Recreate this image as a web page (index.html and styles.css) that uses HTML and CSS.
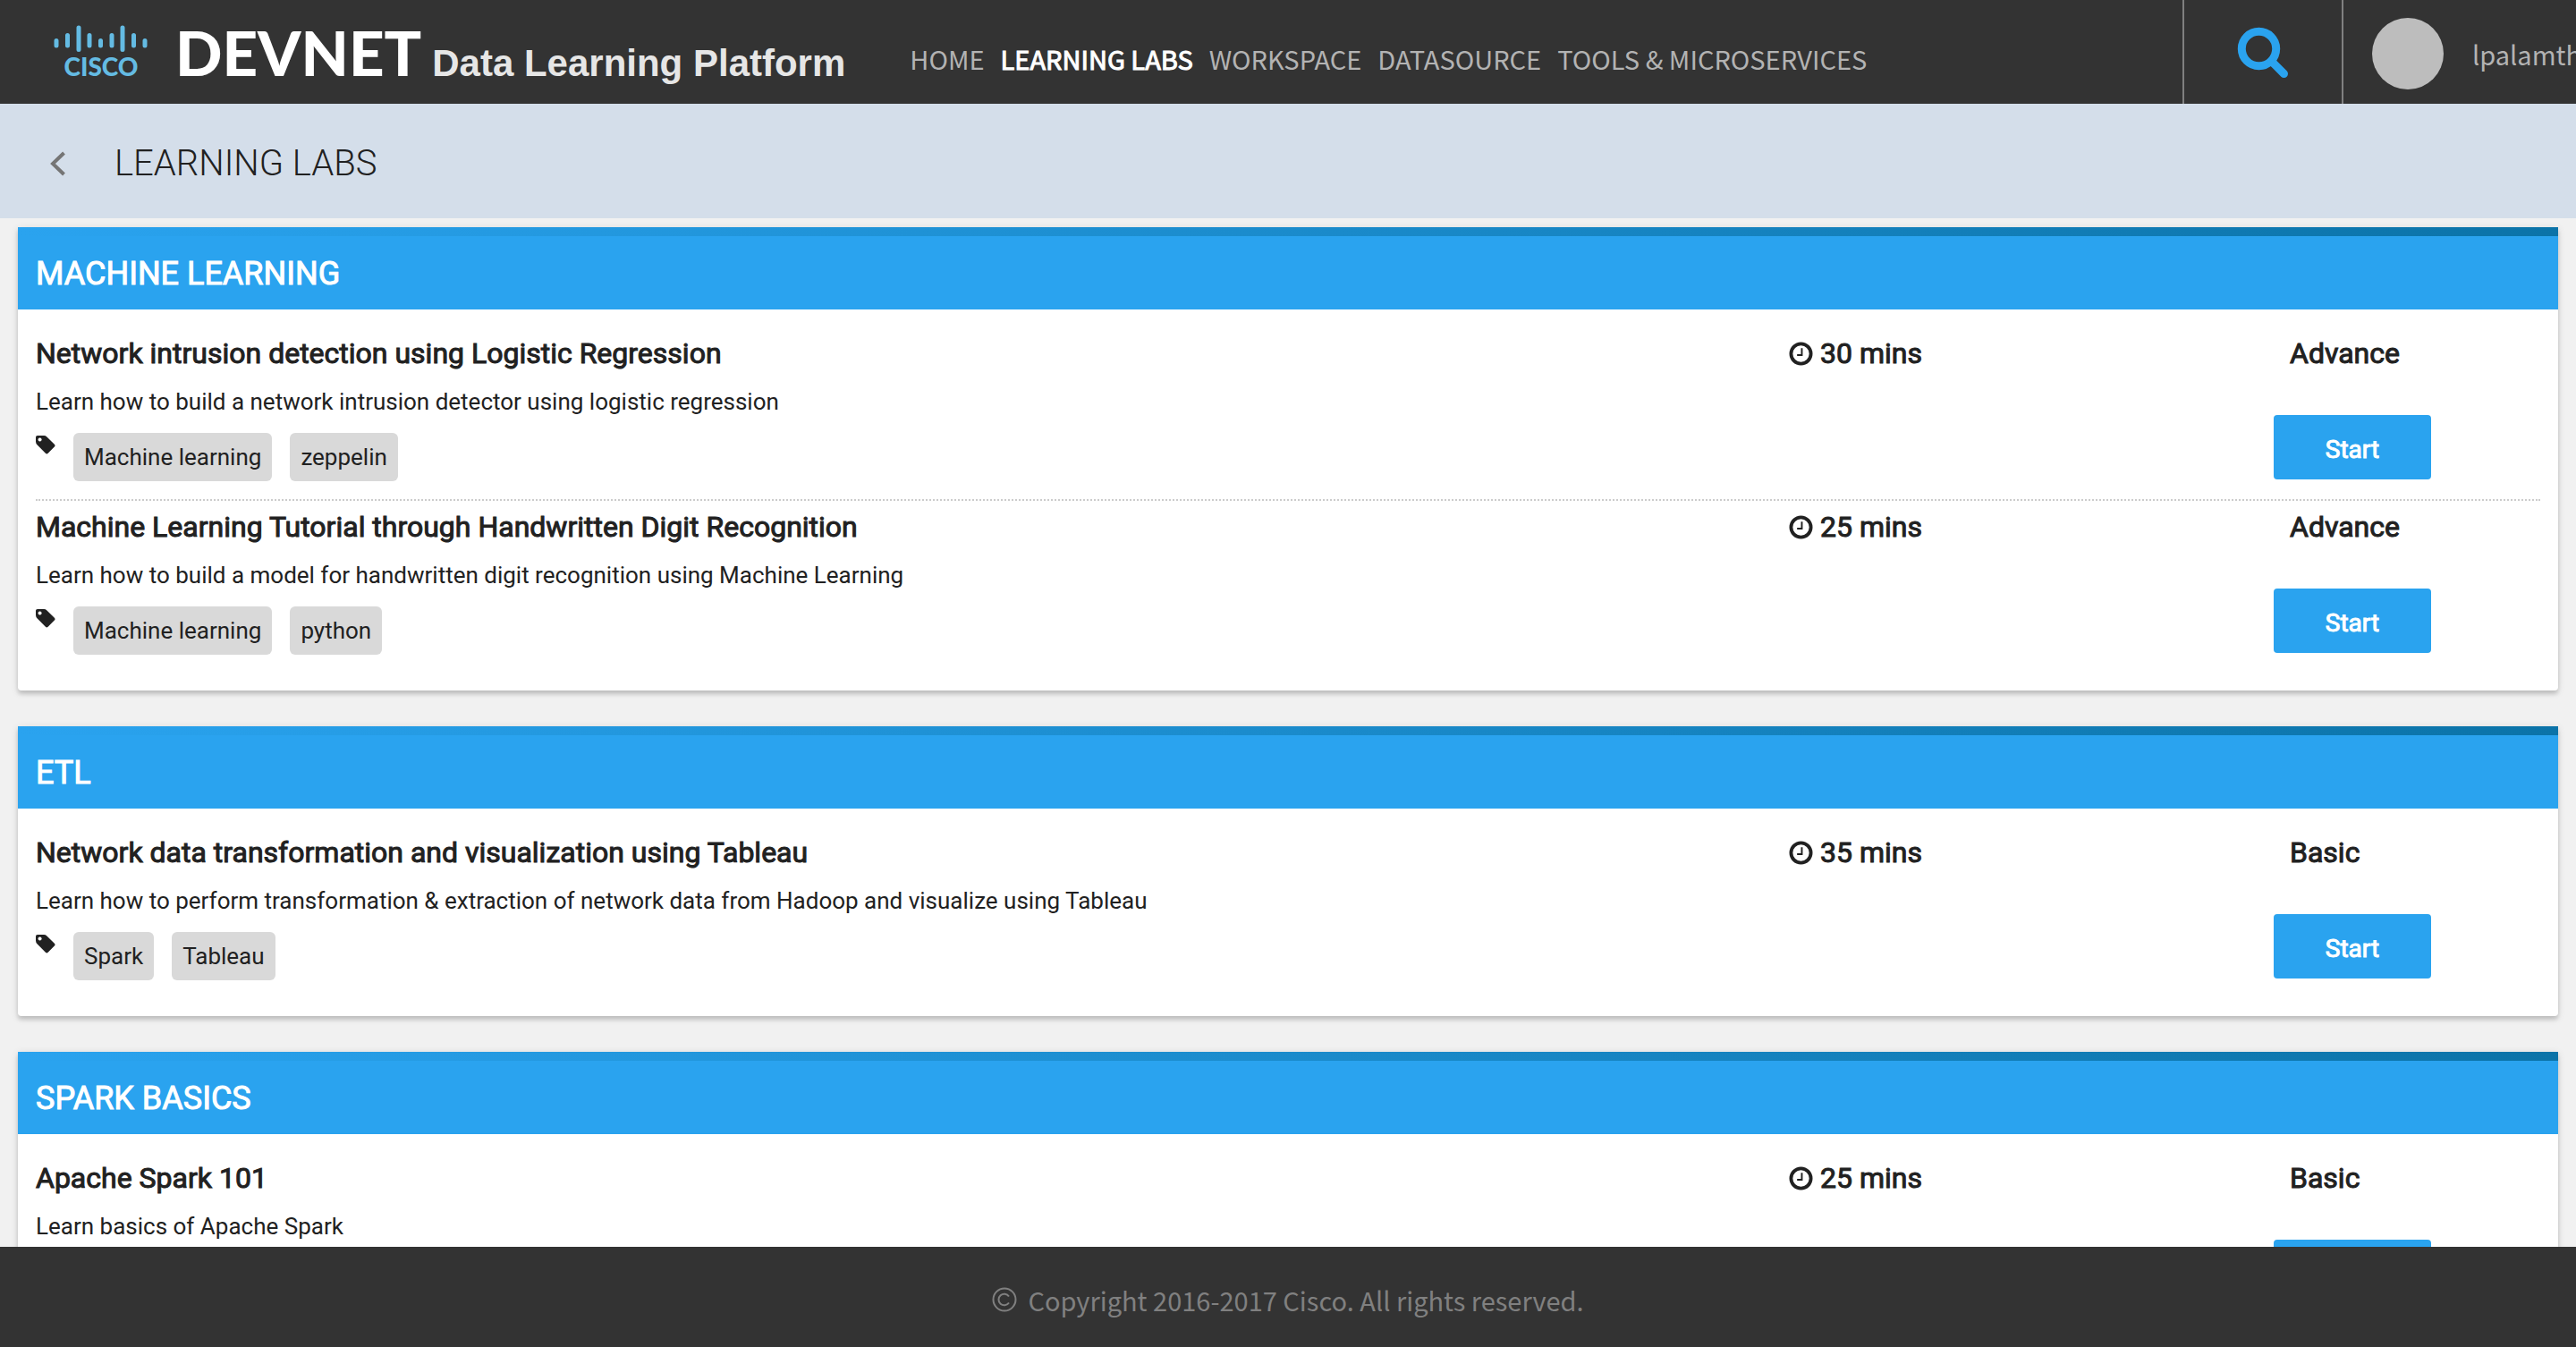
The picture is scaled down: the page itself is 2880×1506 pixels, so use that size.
FILE: index.html
```html
<!DOCTYPE html>
<html lang="en">
<head>
<meta charset="utf-8">
<meta name="viewport" content="width=device-width, initial-scale=1">
<title>Learning Labs</title>
<link rel="stylesheet" href="styles.css">
</head>
<body>
<svg class="sprite" aria-hidden="true">
  <symbol id="tag" viewBox="0 0 23 23">
    <path fill-rule="evenodd" d="M0 3Q0 1 2 1L9.500 1Q11.500 1 13 2.500L21.800 11.300Q23.200 12.700 21.800 14.200L14.300 21.700Q12.800 23 11.400 21.700L1.800 12Q0 10.200 0 8ZM4.800 3.700a2.100 2.100 0 1 0 .01 0Z"/>
  </symbol>
  <symbol id="clock" viewBox="0 0 28 28">
    <circle cx="14" cy="14" r="11.500" fill="none" stroke="currentColor" stroke-width="4"/>
    <path d="M15 7.500V15.500H9.500" fill="none" stroke="currentColor" stroke-width="2"/>
  </symbol>
</svg>

<header class="topbar">
  <a class="brand" href="#" aria-label="Cisco DevNet Data Learning Platform">
    <span class="cisco">
      <svg class="cisco-bars" viewBox="0 0 106 30" aria-hidden="true">
        <path d="M3 17.500V23M15.500 11.500V23M28 3V27.500M40 11.500V23M52.500 17.500V23M65 11.500V23M77 3V27.500M89.500 11.500V23M102 17.500V23"/>
      </svg>
      <span class="cisco-word">CISCO</span>
    </span>
    <span class="devnet">DEVNET</span>
    <span class="platform">Data Learning Platform</span>
  </a>
  <nav class="menu">
    <a href="#">HOME</a>
    <a href="#" class="active">LEARNING LABS</a>
    <a href="#">WORKSPACE</a>
    <a href="#">DATASOURCE</a>
    <a href="#">TOOLS &amp; MICROSERVICES</a>
  </nav>
  <button class="search" type="button" aria-label="Search">
    <svg viewBox="0 0 58 58" aria-hidden="true"><circle cx="24.500" cy="24.500" r="19.200"/><path d="M39 39L52.500 52.500"/></svg>
  </button>
  <a class="user" href="#">
    <span class="avatar"></span>
    <span class="username">lpalamth</span>
  </a>
</header>

<div class="titlebar">
  <button class="back" type="button" aria-label="Back">
    <svg viewBox="0 0 18 28" aria-hidden="true"><path d="M15.500 2L3 14L15.500 26"/></svg>
  </button>
  <h1>LEARNING LABS</h1>
</div>

<main class="labs">
  <section class="card">
    <h2>MACHINE LEARNING</h2>
    <div class="card-body">
      <article class="lab">
        <div class="info">
          <h3>Network intrusion detection using Logistic Regression</h3>
          <p>Learn how to build a network intrusion detector using logistic regression</p>
          <div class="tags"><svg aria-hidden="true"><use href="#tag"/></svg><span>Machine learning</span><span>zeppelin</span></div>
        </div>
        <div class="time"><svg aria-hidden="true"><use href="#clock"/></svg>30 mins</div>
        <div class="action"><span class="level">Advance</span><button type="button">Start</button></div>
      </article>
      <article class="lab">
        <div class="info">
          <h3>Machine Learning Tutorial through Handwritten Digit Recognition</h3>
          <p>Learn how to build a model for handwritten digit recognition using Machine Learning</p>
          <div class="tags"><svg aria-hidden="true"><use href="#tag"/></svg><span>Machine learning</span><span>python</span></div>
        </div>
        <div class="time"><svg aria-hidden="true"><use href="#clock"/></svg>25 mins</div>
        <div class="action"><span class="level">Advance</span><button type="button">Start</button></div>
      </article>
    </div>
  </section>

  <section class="card">
    <h2>ETL</h2>
    <div class="card-body">
      <article class="lab">
        <div class="info">
          <h3>Network data transformation and visualization using Tableau</h3>
          <p>Learn how to perform transformation &amp; extraction of network data from Hadoop and visualize using Tableau</p>
          <div class="tags"><svg aria-hidden="true"><use href="#tag"/></svg><span>Spark</span><span>Tableau</span></div>
        </div>
        <div class="time"><svg aria-hidden="true"><use href="#clock"/></svg>35 mins</div>
        <div class="action"><span class="level">Basic</span><button type="button">Start</button></div>
      </article>
    </div>
  </section>

  <section class="card">
    <h2>SPARK BASICS</h2>
    <div class="card-body">
      <article class="lab">
        <div class="info">
          <h3>Apache Spark 101</h3>
          <p>Learn basics of Apache Spark</p>
        </div>
        <div class="time"><svg aria-hidden="true"><use href="#clock"/></svg>25 mins</div>
        <div class="action"><span class="level">Basic</span><button type="button" aria-label="Start"></button></div>
      </article>
    </div>
  </section>
</main>

<footer class="footer">
  <svg viewBox="0 0 28 28" aria-hidden="true"><circle cx="14" cy="14" r="12.500"/><path d="M19 10.500A6.300 6.300 0 1 0 19 17.500"/></svg>
  <span>Copyright 2016-2017 Cisco. All rights reserved.</span>
</footer>
</body>
</html>
```

FILE: styles.css
```css
* {
  box-sizing: border-box;
}

body {
  margin: 0;
  height: 100vh;
  display: flex;
  flex-direction: column;
  overflow: hidden;
  background: #f1f1f1;
  color: #212121;
  font-family: Roboto, sans-serif;
}

h1, h2, h3, p {
  margin: 0;
}

a {
  color: inherit;
  text-decoration: none;
}

button {
  border: 0;
  padding: 0;
  background: none;
  font-family: inherit;
  cursor: pointer;
}

.sprite {
  display: none;
}

/* Top bar */
.topbar {
  flex: none;
  display: flex;
  height: 116px;
  overflow: hidden;
  background: #333;
  color: #b3b3b3;
  font-family: "Noto Sans CJK SC", sans-serif;
  font-size: 29px;
}

.brand {
  display: flex;
  align-items: baseline;
  padding: 0 72px 0 60px;
  line-height: 118px;
  white-space: nowrap;
}

.cisco {
  width: 106px;
  margin-right: 30px;
  line-height: 1;
  color: #64bbe3;
}

.cisco-bars {
  display: block;
  width: 106px;
  height: 30px;
  fill: none;
  stroke: currentColor;
  stroke-width: 5;
  stroke-linecap: round;
}

.cisco-word {
  display: block;
  font: 900 28px/32px Lato, sans-serif;
  text-align: center;
}

.devnet {
  margin-right: 12px;
  color: #fff;
  font-family: Lato, sans-serif;
  font-weight: 900;
  font-size: 69px;
}

.platform {
  color: #e6e6e6;
  font-family: "Liberation Sans", sans-serif;
  font-weight: 700;
  font-size: 42px;
}

.menu {
  flex: 1;
  display: flex;
  align-items: center;
  gap: 18px;
  padding-top: 14px;
  white-space: nowrap;
}

.menu .active {
  color: #fff;
  -webkit-text-stroke: 1px currentColor;
}

.search {
  flex: none;
  display: grid;
  place-items: center;
  width: 180px;
  padding-top: 2px;
  border: solid #808080;
  border-width: 0 2px;
}

.search svg {
  width: 58px;
  height: 58px;
  fill: none;
  stroke: #2aa3ef;
  stroke-width: 9;
  stroke-linecap: round;
}

.user {
  flex: none;
  display: flex;
  align-items: center;
  gap: 32px;
  width: 260px;
  padding: 4px 0 0 32px;
}

.avatar {
  flex: none;
  width: 80px;
  height: 80px;
  border-radius: 50%;
  background: #bdbdbd;
}

/* Page title */
.titlebar {
  flex: none;
  display: flex;
  align-items: center;
  height: 128px;
  padding: 6px 0 0 56px;
  background: #d4deea;
}

.back {
  display: flex;
  margin-right: 54px;
}

.back svg {
  width: 18px;
  height: 28px;
  fill: none;
  stroke: #757575;
  stroke-width: 4;
}

h1 {
  font-weight: 300;
  font-size: 40px;
  line-height: 56px;
}

/* Lab cards */
.labs {
  flex: 1;
  min-height: 0;
  overflow: auto;
  scrollbar-width: none;
  padding: 10px 20px;
}

.card {
  margin-bottom: 40px;
  border-radius: 0 0 4px 4px;
  background: #fff;
  box-shadow: 0 4px 4px rgba(0, 0, 0, .14), 0 2px 10px rgba(0, 0, 0, .12);
}

.card h2 {
  height: 92px;
  padding: 10px 20px 0;
  background: linear-gradient(90deg, #2aa3ef, #0b73a8) top / 100% 10px no-repeat #2aa3ef;
  color: #fff;
  font-weight: 400;
  font-size: 36px;
  line-height: 84px;
  -webkit-text-stroke: 1px currentColor;
}

.card-body {
  padding: 20px;
}

.lab {
  display: grid;
  grid-template-columns: 70% 1fr 298px;
  min-height: 192px;
}

.lab:not(:last-child) {
  padding-bottom: 20px;
  border-bottom: 2px dotted #ccc;
}

h3, .time, .level {
  font-weight: 400;
  font-size: 32px;
  line-height: 58px;
  -webkit-text-stroke: 1px currentColor;
}

.info p {
  font-size: 26px;
  line-height: 50px;
}

.tags {
  display: flex;
  gap: 20px;
  margin-top: 10px;
}

.tags svg {
  width: 22px;
  height: 26px;
  fill: currentColor;
}

.tags span {
  padding: 0 12px;
  border-radius: 6px;
  background: #d9d9d9;
  font-size: 26px;
  line-height: 54px;
}

.time {
  display: flex;
  align-items: center;
  align-self: start;
  gap: 8px;
}

.time svg {
  width: 27px;
  height: 27px;
}

.level {
  display: block;
  padding-left: 18px;
}

.action button {
  display: block;
  width: 176px;
  height: 72px;
  margin-top: 40px;
  padding-top: 4px;
  border-radius: 4px;
  background: #2aa3ef;
  color: #fff;
  font-size: 28px;
  -webkit-text-stroke: 1px currentColor;
}

/* Footer */
.footer {
  flex: none;
  display: flex;
  align-items: center;
  justify-content: center;
  gap: 12px;
  height: 112px;
  padding-top: 6px;
  background: #333;
  color: #808080;
  font-family: "Noto Sans CJK SC", sans-serif;
  font-size: 29px;
}

.footer svg {
  width: 28px;
  height: 28px;
  fill: none;
  stroke: currentColor;
  stroke-width: 2;
}
```
